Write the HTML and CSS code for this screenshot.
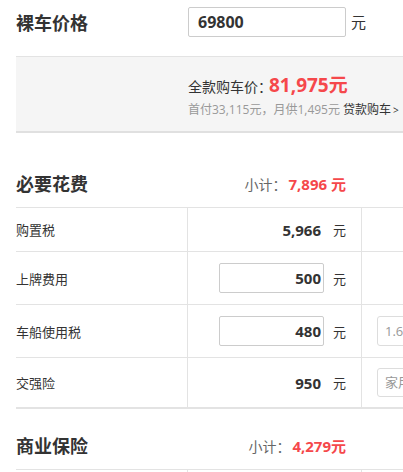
FILE: index.html
```html
<!DOCTYPE html>
<html lang="zh-CN">
<head>
<meta charset="utf-8">
<title>购车计算</title>
<link rel="stylesheet" href="styles.css">
</head>
<body>
<div class="page">
  <div class="price-row">
    <h2 class="title price-title">裸车价格</h2>
    <div class="price-input">69800</div>
    <span class="unit-big">元</span>
  </div>

  <div class="summary">
    <div class="sum-line">全款购车价：<span class="sum-num">81,975元</span></div>
    <div class="sub-line">首付33,115元，月供1,495元 <a class="loan">贷款购车<span class="arrow">&gt;</span></a></div>
  </div>

  <div class="sec-head first">
    <h2 class="title">必要花费</h2>
    <div class="subtotal">小计：<span class="red">7,896 元</span></div>
  </div>

  <div class="table">
    <div class="row r1">
      <div class="cell label">购置税</div>
      <div class="cell val"><span class="num">5,966</span><span class="unit">元</span></div>
      <div class="cell extra"></div>
    </div>
    <div class="row r2">
      <div class="cell label">上牌费用</div>
      <div class="cell val"><span class="box">500</span><span class="unit">元</span></div>
      <div class="cell extra"></div>
    </div>
    <div class="row r3">
      <div class="cell label">车船使用税</div>
      <div class="cell val"><span class="box">480</span><span class="unit">元</span></div>
      <div class="cell extra"><span class="sel">1.6L(含)-2.0L(含)</span></div>
    </div>
    <div class="row r4">
      <div class="cell label">交强险</div>
      <div class="cell val"><span class="num">950</span><span class="unit">元</span></div>
      <div class="cell extra"><span class="sel sel-short">家用6座以下</span></div>
    </div>
  </div>

  <div class="sec-head second">
    <h2 class="title">商业保险</h2>
    <div class="subtotal">小计：<span class="red">4,279元</span></div>
  </div>

  <div class="table table-next">
    <div class="row r5">
      <div class="cell label"></div>
      <div class="cell val"></div>
      <div class="cell extra"></div>
    </div>
  </div>
</div>
</body>
</html>
```

FILE: styles.css
```css
html, body {
  margin: 0;
  padding: 0;
  overflow: hidden;
  background: #fff;
}
body {
  font-family: "Open Sans", "Noto Sans CJK SC", sans-serif;
  color: #333;
}
.page {
  width: 560px;
  padding-left: 16px;
}
.title {
  margin: 0;
  font-size: 18px;
  font-weight: 700;
  color: #333;
  font-family: "Noto Sans CJK SC", sans-serif;
  line-height: 26px;
}
.price-row {
  display: flex;
  align-items: center;
  padding-top: 7px;
  height: 29px;
}
.price-title {
  width: 172px;
}
.price-input {
  box-sizing: border-box;
  width: 158px;
  height: 30px;
  border: 1px solid #ccc;
  border-radius: 2px;
  padding-left: 9px;
  font-size: 16px;
  font-weight: 700;
  line-height: 28px;
  color: #333;
}
.unit-big {
  margin-left: 5px;
  font-size: 15px;
  font-family: "Noto Sans CJK SC", sans-serif;
}
.summary {
  margin-top: 20px;
  background: #f5f5f5;
  border-top: 1px solid #e3e3e3;
  border-bottom: 2px solid #e0e0e0;
  padding: 15px 0 12px 172px;
}
.sum-line {
  font-size: 14px;
  line-height: 26px;
  height: 26px;
  color: #333;
  font-family: "Noto Sans CJK SC", sans-serif;
}
.sum-num {
  font-family: "Open Sans", "Noto Sans CJK SC", sans-serif;
  font-size: 19px;
  font-weight: 700;
  color: #f5484b;
  margin-left: -3px;
}
.sub-line {
  margin-top: 3px;
  font-size: 12px;
  line-height: 18px;
  color: #999;
  white-space: nowrap;
}
.loan {
  color: #333;
}
.arrow {
  font-size: 10px;
  margin-left: 2px;
}
.sec-head {
  display: flex;
  align-items: center;
  justify-content: space-between;
  width: 330px;
  height: 48px;
}
.sec-head.first {
  margin-top: 26px;
}
.sec-head.second {
  margin-top: 12px;
}
.subtotal {
  font-size: 14px;
  color: #666;
  font-family: "Noto Sans CJK SC", sans-serif;
}
.subtotal .red {
  font-family: "Open Sans", "Noto Sans CJK SC", sans-serif;
  font-size: 15px;
  font-weight: 700;
  color: #f5484b;
  margin-left: 2px;
}
.table {
  border-top: 1px solid #e3e3e3;
}
.row {
  display: grid;
  grid-template-columns: 171px 174px 200px;
  border-bottom: 1px solid #e3e3e3;
}
.r1 { height: 43px; }
.r2 { height: 52px; }
.r3 { height: 52px; }
.r4 { height: 49px; border-bottom: 2px solid #e3e3e3; }
.r5 { height: 20px; border-bottom: none; }
.cell {
  display: flex;
  align-items: center;
}
.label {
  font-size: 13px;
  color: #333;
  font-family: "Noto Sans CJK SC", sans-serif;
}
.val {
  border-left: 1px solid #e3e3e3;
  justify-content: flex-end;
  padding-right: 15px;
}
.extra {
  border-left: 1px solid #e3e3e3;
  padding-left: 15px;
}
.num {
  font-size: 15px;
  font-weight: 700;
  color: #333;
  padding-right: 3px;
}
.box {
  box-sizing: border-box;
  width: 105px;
  height: 30px;
  border: 1px solid #ccc;
  border-radius: 2px;
  text-align: right;
  padding-right: 2px;
  font-size: 15px;
  font-weight: 700;
  line-height: 28px;
  color: #333;
}
.unit {
  margin-left: 9px;
  font-size: 13px;
  color: #333;
  font-family: "Noto Sans CJK SC", sans-serif;
}
.sel {
  box-sizing: border-box;
  height: 30px;
  width: 150px;
  border: 1px solid #ddd;
  border-radius: 3px;
  padding-left: 7px;
  font-size: 13px;
  line-height: 28px;
  color: #999;
  white-space: nowrap;
  overflow: hidden;
}
.sel-short {
  height: 29px;
  line-height: 27px;
}
```
